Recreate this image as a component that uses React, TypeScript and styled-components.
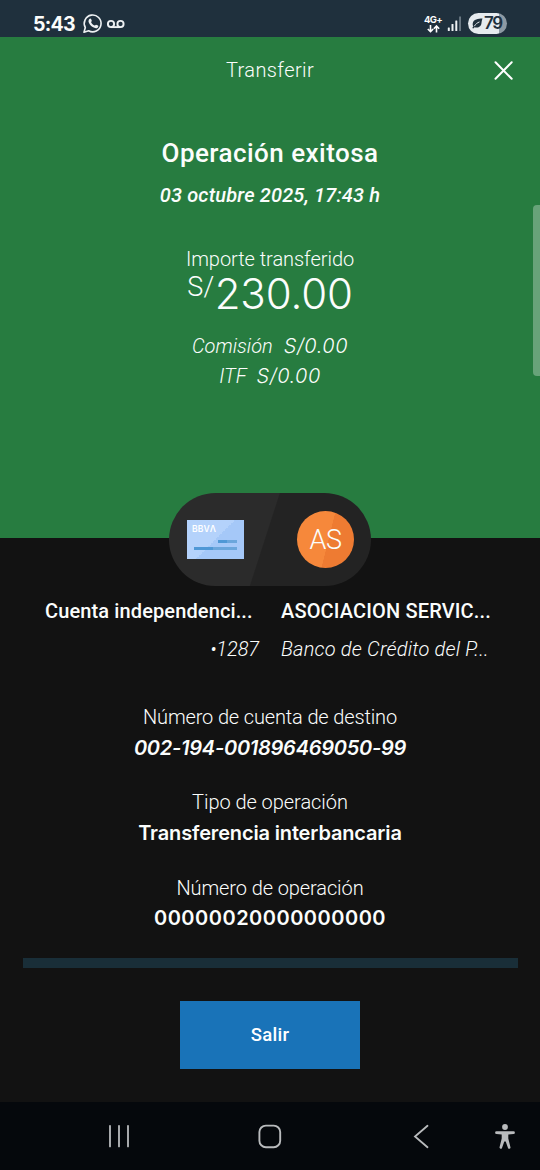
import React from 'react';
import styled, { createGlobalStyle } from 'styled-components';

const GlobalStyle = createGlobalStyle`
  *, *::before, *::after { box-sizing: border-box; }
  body { margin: 0; background: #121212; }
`;

const Screen = styled.div`
  position: relative;
  width: 540px;
  height: 1170px;
  display: flex;
  flex-direction: column;
  overflow: hidden;
  background: #121212;
  color: #fbfdfc;
  font-family: Roboto, 'Liberation Sans', sans-serif;
`;

const StatusBar = styled.div`
  flex: none;
  height: 37px;
  padding: 10px 33px 0;
  display: flex;
  justify-content: space-between;
  align-items: flex-start;
  background: #1f303d;
`;

const StatusGroup = styled.div`
  display: flex;
  align-items: flex-start;
`;

const Clock = styled.span`
  width: 49px;
  font: 700 19.5px/28px Inter, sans-serif;
  letter-spacing: -0.75px;
`;

const Network = styled.div`
  width: 20px;
  margin: 5px 4px 0 0;
  display: flex;
  flex-direction: column;
  align-items: center;
  font: 700 9.5px/10px Inter, sans-serif;
  letter-spacing: -0.7px;
`;

const Battery = styled.div`
  width: 39px;
  height: 21px;
  margin: 3px 0 0 6px;
  padding-left: 4px;
  display: flex;
  align-items: center;
  gap: 1px;
  border-radius: 11px;
  background: linear-gradient(90deg, #e6ebef 0 79%, #8d99a3 79%);
  color: #1f303d;
  font: 600 17px/21px Inter, sans-serif;
  letter-spacing: -1.4px;
`;

const Hero = styled.section`
  flex: none;
  height: 501px;
  display: flex;
  flex-direction: column;
  align-items: center;
  background: #277c40;
`;

const Header = styled.header`
  width: 100%;
  height: 66px;
  padding: 0 26px 0 46px;
  display: grid;
  grid-template-columns: 20px 1fr 20px;
  justify-items: center;
  align-items: center;
`;

const HeaderTitle = styled.h1`
  grid-column: 2;
  margin: 0;
  padding-right: 20px;
  font-size: 20px;
  font-weight: 340;
  line-height: 24px;
  letter-spacing: 0.4px;
`;

const CloseButton = styled.button`
  width: 20px;
  height: 20px;
  padding: 0;
  border: 0;
  background: none;
  color: inherit;
  display: flex;
`;

const Text = styled.div<{
  $bold?: boolean;
  $italic?: boolean;
  $wide?: boolean;
  $right?: boolean;
  $spacing?: number;
  $top?: number;
}>`
  margin-top: ${p => p.$top ?? 0}px;
  font-family: ${p => (p.$wide ? 'Inter' : 'Roboto')}, sans-serif;
  font-size: 20px;
  font-weight: ${p => (p.$bold ? (p.$wide ? 600 : 500) : p.$wide ? 300 : 340)};
  font-style: ${p => (p.$italic ? 'italic' : 'normal')};
  line-height: 24px;
  letter-spacing: ${p => p.$spacing ?? 0}px;
  text-align: ${p => (p.$right ? 'right' : 'left')};
  white-space: pre;
`;

const Title = styled.h2`
  margin: 34px 0 0;
  font-size: 26px;
  font-weight: 500;
  line-height: 32px;
  letter-spacing: 0.45px;
`;

const Amount = styled.div`
  margin-top: 1px;
  height: 44px;
  display: flex;
  align-items: flex-start;
  font-family: Inter, sans-serif;
  font-size: 42px;
  font-weight: 300;
  line-height: 44px;
  letter-spacing: -0.1px;
`;

const Currency = styled.span`
  font-family: Roboto, sans-serif;
  font-size: 27px;
  font-weight: 340;
  line-height: 30px;
  letter-spacing: 0.4px;
`;

const Fee = styled.div<{ $top: number; $gap: number }>`
  margin-top: ${p => p.$top}px;
  display: flex;
  gap: ${p => p.$gap}px;
`;

const Parties = styled.div`
  flex: none;
  align-self: center;
  z-index: 1;
  width: 202px;
  height: 93px;
  margin-top: -45px;
  padding: 0 17px 0 18px;
  display: flex;
  align-items: center;
  justify-content: space-between;
  border-radius: 47px;
  background: linear-gradient(107.9deg, #2b2b2b 47.5%, #232323 48%);
`;

const Card = styled.div`
  width: 57px;
  height: 39px;
  padding: 5px 7px 0 5px;
  display: flex;
  flex-direction: column;
  align-items: flex-end;
  background: linear-gradient(135deg, #b4d2fb 50%, #a5c8f8 50%);
`;

const CardBrand = styled.span`
  align-self: flex-start;
  height: 15px;
  color: #fff;
  font: 600 8.5px/9px Inter, sans-serif;
  letter-spacing: 0.1px;
`;

const CardLine = styled.span<{ $width: number }>`
  width: ${p => p.$width}px;
  height: 3px;
  margin-bottom: 4px;
  background: linear-gradient(90deg, #4f98d6 45%, #6ba6dc 45%);
`;

const Avatar = styled.div`
  width: 57px;
  height: 57px;
  border-radius: 50%;
  display: flex;
  align-items: center;
  justify-content: center;
  background: linear-gradient(104deg, #f6883b 54%, #ee7b32 54.5%);
  font-size: 27px;
  font-weight: 300;
  letter-spacing: -0.5px;
`;

const Accounts = styled.div`
  flex: none;
  margin-top: 13px;
  padding: 0 45px;
  display: grid;
  grid-template-columns: 214px 210px;
  column-gap: 22px;
  row-gap: 14px;
`;

const Details = styled.div`
  flex: none;
  margin-top: 44px;
  display: flex;
  flex-direction: column;
  align-items: center;
`;

const Divider = styled.div`
  flex: none;
  align-self: center;
  width: 495px;
  height: 10px;
  margin-top: 28px;
  background: #192e38;
`;

const ExitButton = styled.button`
  flex: none;
  align-self: center;
  width: 180px;
  height: 68px;
  margin-top: 33px;
  padding: 0 0 1px;
  border: 0;
  background: #1973b8;
  color: #fff;
  font: 500 18.500px/24px Roboto, sans-serif;
  letter-spacing: 0.3px;
`;

const NavBar = styled.nav`
  height: 68px;
  margin-top: auto;
  padding: 0 24px 0 108px;
  display: flex;
  align-items: center;
  background: #05080c;
  color: #b9bbbd;
`;

const NavIcon = styled.span<{ $before?: number }>`
  height: 26px;
  margin-left: ${p => p.$before ?? 0}px;
  display: flex;
`;

const ScrollThumb = styled.div`
  position: absolute;
  top: 205px;
  right: 0;
  width: 7px;
  height: 171px;
  border-radius: 4px 0 0 4px;
  background: #68a379;
`;

export default function App() {
  return (
    <>
      <GlobalStyle />
      <Screen>
        <StatusBar>
          <StatusGroup>
            <Clock>5:43</Clock>
            <svg width="45" height="24" viewBox="0 0 45 24" fill="none" stroke="#eef1f3">
              <path d="M2 22.2l1.3-4.7a8.4 8.4 0 1 1 3.3 3.3z" strokeWidth="1.6" strokeLinejoin="round" />
              <path d="M7.2 9.2c.7-.9 1.6-.8 1.9-.1l.7 1.7c.1.4-.7 1.2-.7 1.4.6 1.6 2 2.8 3.6 3.4.3 0 1-1.1 1.400-.9l1.900.9c.6.4.4 1.500-.4 2.100-1.300 1-3.100.5-5-.6-2-1.300-3.500-3.300-4-5-.2-1.300.1-2.300.6-2.900z" fill="#eef1f3" stroke="none" />
              <circle cx="29" cy="14" r="3.1" strokeWidth="1.9" />
              <circle cx="38.5" cy="14" r="3.1" strokeWidth="1.9" />
              <path d="M29 17.1h9.500" strokeWidth="1.9" />
            </svg>
          </StatusGroup>
          <StatusGroup>
            <Network>
              4G+
              <svg width="13" height="8" viewBox="0 0 13 8" fill="none" stroke="#fff" strokeWidth="1.6">
                <path d="M3.500 0v6.500M.8 4l2.700 2.700L6.200 4M9.500 7.500V1M6.800 3.700L9.500 1l2.700 2.700" />
              </svg>
            </Network>
            <svg width="15" height="22" viewBox="0 0 15 22">
              <g fill="#eef1f3">
                <rect x="0.8" y="17.5" width="2" height="3.5" rx="0.5" />
                <rect x="4.5" y="14" width="2" height="7" rx="0.5" />
                <rect x="8.3" y="10.5" width="2" height="10.5" rx="0.5" />
              </g>
              <rect x="12.2" y="6.5" width="1.7" height="14.5" fill="#72808a" />
            </svg>
            <Battery>
              <svg width="11" height="11" viewBox="0 0 11 11">
                <path d="M10.5.6C6 .8 1.5 1.3.8 5c-.3 1.700 0 2.600.5 3.300L.3 10l1 .6 1.200-1.400c2.500.9 5.500.3 6.600-2.400.6-1.600.4-3.900 1.400-6.200z" fill="#1f303d" />
                <path d="M2.300 8.200C3.800 5.800 5.300 4.800 7.500 3.900" stroke="#e6ebef" fill="none" />
              </svg>
              79
            </Battery>
          </StatusGroup>
        </StatusBar>

        <Hero>
          <Header>
            <HeaderTitle>Transferir</HeaderTitle>
            <CloseButton aria-label="Cerrar">
              <svg width="20" height="20" viewBox="0 0 20 20" stroke="#fff" strokeWidth="2" strokeLinecap="round">
                <path d="M1.5 2.3l16.200 16.500M17.700 2.300L1.500 18.800" />
              </svg>
            </CloseButton>
          </Header>
          <Title>Operación exitosa</Title>
          <Text $bold $italic $top={14} $spacing={0.16}>03 octubre 2025, 17:43 h</Text>
          <Text $top={40} $spacing={-0.05}>Importe transferido</Text>
          <Amount><Currency>S/</Currency>230.00</Amount>
          <Fee $top={18} $gap={11}>
            <Text $italic>Comisión</Text>
            <Text $italic $wide $spacing={0.5}>S/0.00</Text>
          </Fee>
          <Fee $top={6} $gap={10}>
            <Text $italic>ITF</Text>
            <Text $italic $wide $spacing={0.5}>S/0.00</Text>
          </Fee>
        </Hero>

        <Parties>
          <Card>
            <CardBrand>BBVΛ</CardBrand>
            <CardLine $width={19} />
            <CardLine $width={43} />
          </Card>
          <Avatar>AS</Avatar>
        </Parties>

        <Accounts>
          <Text $bold $spacing={0.12}>Cuenta independenci...</Text>
          <Text $bold $spacing={0.15}>ASOCIACION SERVIC...</Text>
          <Text $italic $right $spacing={-0.1}>•1287</Text>
          <Text $italic $spacing={0.2}>Banco de Crédito del P...</Text>
        </Accounts>

        <Details>
          <Text $spacing={-0.15}>Número de cuenta de destino</Text>
          <Text $wide $bold $italic $top={7} $spacing={-0.25}>002-194-001896469050-99</Text>
          <Text $top={30} $spacing={-0.05}>Tipo de operación</Text>
          <Text $wide $bold $top={7} $spacing={-0.15}>Transferencia interbancaria</Text>
          <Text $top={31} $spacing={-0.1}>Número de operación</Text>
          <Text $wide $bold $top={6} $spacing={0.5}>00000020000000000</Text>
        </Details>

        <Divider />
        <ExitButton>Salir</ExitButton>

        <NavBar>
          <NavIcon>
            <svg width="22" height="26" viewBox="0 0 22 26" stroke="currentColor" strokeWidth="1.8" strokeLinecap="round">
              <path d="M2 2.800v20.600M11 2.800v20.600M20 2.800v20.600" />
            </svg>
          </NavIcon>
          <NavIcon $before={128}>
            <svg width="24" height="26" viewBox="0 0 24 26" fill="none" stroke="currentColor" strokeWidth="1.9">
              <rect x="1.4" y="2.6" width="20.8" height="21.6" rx="6.5" />
            </svg>
          </NavIcon>
          <NavIcon $before={131}>
            <svg width="18" height="26" viewBox="0 0 18 26" fill="none" stroke="currentColor" strokeWidth="1.8" strokeLinecap="round">
              <path d="M14.500 2.800L2 13.500 14.500 24.200" />
            </svg>
          </NavIcon>
          <NavIcon $before={64}>
            <svg width="20" height="26" viewBox="0 0 20 26" fill="currentColor">
              <circle cx="10" cy="4" r="2.9" />
              <path d="M1.500 8.300h17a1.400 1.400 0 0 1 0 2.800L13.300 11.600v4l2.100 8.400a1.200 1.200 0 0 1-2.400.9L10.700 18.500H9.300L7 24.900a1.200 1.200 0 0 1-2.400-.9l2.100-8.400v-4L1.500 11.100a1.400 1.400 0 0 1 0-2.800z" />
            </svg>
          </NavIcon>
        </NavBar>
        <ScrollThumb />
      </Screen>
    </>
  );
}
